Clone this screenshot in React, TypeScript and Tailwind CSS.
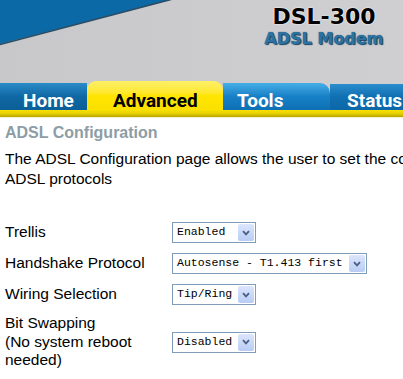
function Chevron() {
  return (
    <svg width="8" height="6" viewBox="0 0 8 6">
      <path d="M1 1.2 L4 4.4 L7 1.2" fill="none" stroke="#4a5f87" strokeWidth="1.8" />
    </svg>
  );
}

function FakeSelect({ value, width }: { value: string; width: string }) {
  return (
    <div className={`flex h-[21px] items-center justify-between border border-[#7f9db9] bg-white pl-[4px] pr-[1px] ${width}`}>
      <span className="font-['Liberation_Mono',monospace] text-[11.5px] whitespace-nowrap">{value}</span>
      <span className="flex h-[17px] w-[16px] items-center justify-center rounded-[2px] bg-gradient-to-b from-[#dce6fb] to-[#b8ccf4]">
        <Chevron />
      </span>
    </div>
  );
}

const rows = [
  { label: 'Trellis', value: 'Enabled', width: 'w-[84px]' },
  { label: 'Handshake Protocol', value: 'Autosense - T1.413 first', width: 'w-[195px]' },
  { label: 'Wiring Selection', value: 'Tip/Ring', width: 'w-[84px]' },
];

export default function App() {
  return (
    <div className="h-[379px] w-[403px] overflow-hidden bg-white font-['Liberation_Sans',Arial,sans-serif] text-black">
      <header className="relative bg-gradient-to-r from-[#c8c8cb] to-[#cfcfd2]">
        <svg className="absolute left-0 top-0" width="190" height="50" viewBox="0 0 190 50">
          <polygon points="0,0 170,0 0,44" fill="#0b6aa5" />
          <line x1="171" y1="-0.5" x2="0" y2="44.5" stroke="#2b4c63" strokeWidth="1.6" />
        </svg>

        <div className="relative flex h-[81px] justify-end pr-[16px] pt-[3px]">
          <div className="flex w-[126px] flex-col items-center">
            <span className="font-['DejaVu_Sans',sans-serif] text-[22px] font-bold leading-[27px] text-black [text-shadow:0_0_2px_#fff,0_0_1px_#fff]">
              DSL-300
            </span>
            <span className="font-['DejaVu_Sans',sans-serif] text-[16px] font-bold leading-[18px] text-[#2c73a3] [text-shadow:0_0_1px_#0d3350,1px_1px_1px_#1a4564]">
              ADSL Modem
            </span>
          </div>
        </div>

        <nav className="relative flex h-[29px] items-end font-['Roboto',sans-serif] text-[19px] font-bold leading-none">
          <div className="flex h-[27px] w-[87px] items-end bg-gradient-to-b from-[#2a8cc8] via-[#0f68a4] to-[#0c5f98] pl-[23px] text-white">
            Home
          </div>
          <div className="flex h-[29px] w-[136px] items-end rounded-t-[9px] bg-gradient-to-b from-[#fff066] via-[#ffe600] to-[#fbe000] pl-[26px] text-black">
            Advanced
          </div>
          <div className="flex h-[27px] w-[107px] items-end rounded-tr-[10px] bg-gradient-to-b from-[#45aee6] via-[#1680c6] to-[#0f70b4] pl-[14px] text-white">
            Tools
          </div>
          <div className="flex h-[26px] flex-1 items-end bg-gradient-to-b from-[#2a8dcc] via-[#0f6fb2] to-[#0d68a8] pl-[17px] text-white">
            Status
          </div>
        </nav>
        <div className="h-[7px] bg-gradient-to-b from-[#f7e200] via-[#e8d000] to-[#b9a400]" />
      </header>
      <div className="h-[1px] bg-[#f4f0c8]" />

      <main className="px-[5px] pt-[6px]">
        <h2 className="text-[16px] font-bold leading-[18px] text-[#8d9da5]">ADSL Configuration</h2>
        <p className="mt-[7px] whitespace-nowrap text-[15.5px] leading-[20px]">
          The ADSL Configuration page allows the user to set the configuration of the
          <br />
          ADSL protocols
        </p>

        <div className="mt-[28px] text-[15.5px] leading-[18.5px]">
          {rows.map(r => (
            <div key={r.label} className="flex h-[31px] items-center">
              <div className="w-[167px]">{r.label}</div>
              <FakeSelect value={r.value} width={r.width} />
            </div>
          ))}
          <div className="flex h-[64px] items-center">
            <div className="w-[167px]">
              Bit Swapping
              <br />
              (No system reboot needed)
            </div>
            <FakeSelect value="Disabled" width="w-[84px]" />
          </div>
        </div>
      </main>
    </div>
  );
}
